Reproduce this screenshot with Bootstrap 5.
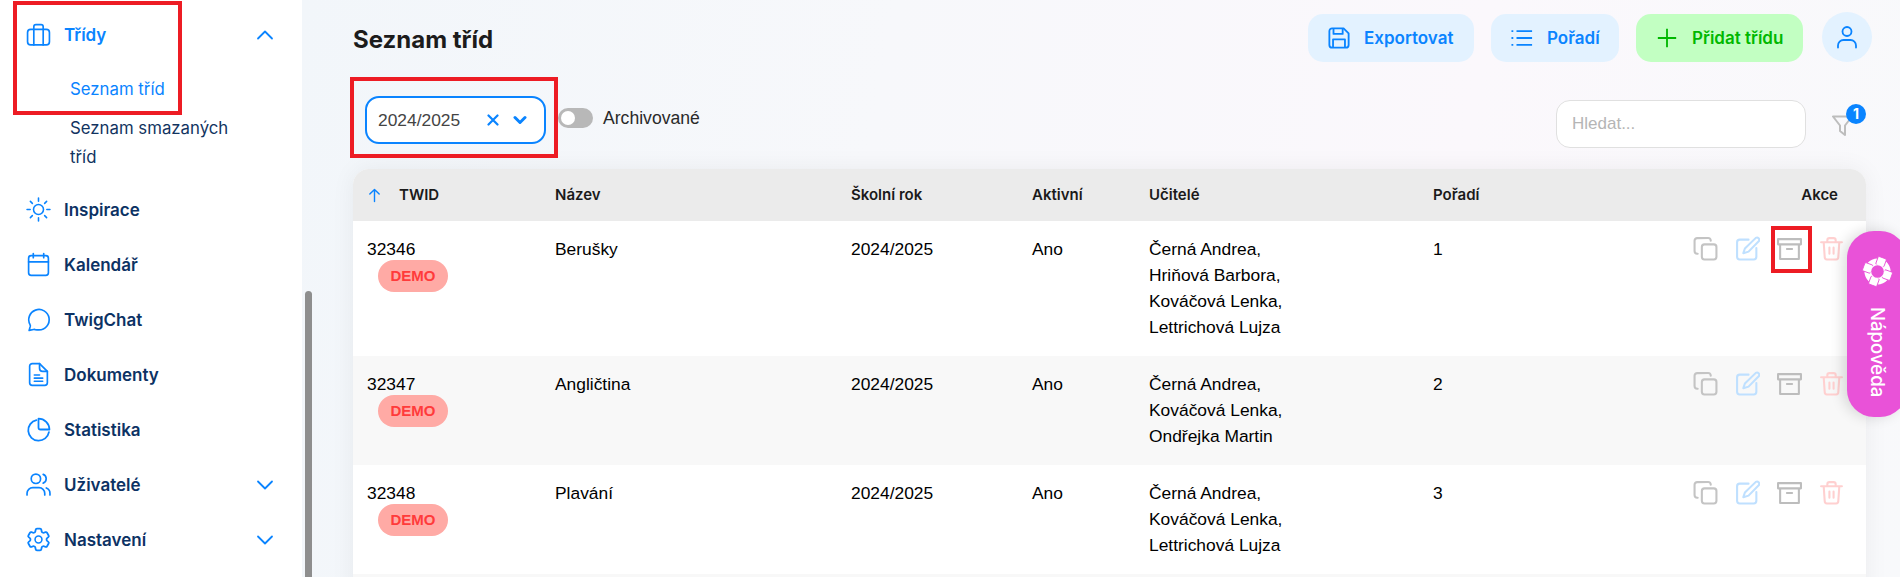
<!DOCTYPE html>
<html lang="cs">
<head>
<meta charset="utf-8">
<title>Seznam tříd</title>
<link href="https://cdn.jsdelivr.net/npm/bootstrap@5.3.0/dist/css/bootstrap.min.css" rel="stylesheet">
<style>
html,body{height:577px;overflow:hidden}
body{font-family:"Liberation Sans",Arial,sans-serif;color:#000;background:#fff;font-size:17px}
.shell{position:relative;width:1900px;height:577px;overflow:hidden}
.side{width:302px;flex:none;background:#fff;padding-top:7px}
.side-item{height:55px;padding:0 0 0 26px;font:600 17px/24px Inter,sans-serif;color:#0c3264;text-decoration:none}
.side-item svg.ic{width:25px;height:25px;flex:none;color:#0a84ff;margin-right:13px}
.side-item .chev{width:20px;height:20px;color:#0a84ff;margin-left:auto;margin-right:27px}
.side-item.on{color:#0a84ff}
.subs{padding:13px 60px 10px 70px;font:400 16.8px/29px Inter,sans-serif}
.subs a{display:block;color:#12345f;text-decoration:none}
.subs a+a{margin-top:10px}
.subs a.on{color:#0a84ff}
.main{flex:1;min-width:0;padding:14px 34px 0 51px;background:linear-gradient(100deg,#f2f6fa 0%,#f7f8fb 35%,#fbf8fc 70%,#f8f9fb 100%)}
.ptitle{font:700 24px/36px Inter,sans-serif;color:#1c1c1c;margin:0;padding-top:3px}
.tbar{height:48px;margin-right:-6px}
.tbtn{height:48px;border:0;border-radius:15px;background:#e3f2ff;color:#0a84ff;font:600 17px/24px Inter,sans-serif;padding:0 0 0 20px;gap:14px;white-space:nowrap}
.tbtn svg{width:22px;height:22px;flex:none}
.tbtn.add{background:#c2ffc2;color:#00b800}
.tb-exp{width:166px;margin-right:17px}.tb-ord{width:128px;margin-right:17px}.tb-add{width:167px}
.tbtn.who{width:50px;height:50px;border-radius:50%;padding:0;margin-top:-2px;margin-left:19px}
.tbtn.who svg{width:24px;height:24px}
.filters{margin-top:34px;height:48px;padding-left:12px}
.sel{width:181px;height:48px;border:2px solid #0a84ff;border-radius:14px;background:#fff;padding:0 17px 0 11px;color:#444;font-size:17.4px}
.sel svg{color:#0a84ff}
.sel .dn{margin-left:14px}
.tog{width:35px;height:20px;border-radius:10px;background:#b8b8b8;margin:0 10px 0 12px;padding:3px}
.tog i{display:block;width:14px;height:14px;border-radius:50%;background:#fff}
.tog-lab{color:#2a2a2a;font-size:17.6px;height:44px}
.tog-wrap{height:44px}
.srch{width:250px;height:48px;margin:4px 0 0 auto;border:1px solid #e0e0e0;border-radius:14px;background:#fff;padding:0 15px;color:#b5b5b5;font-size:17px}
.srch::placeholder{color:#b5b5b5}
.flt{position:relative;width:34px;margin-left:26px;height:48px;color:#bdbdbd}
.flt svg{margin-top:19px;display:block}
.flt b{position:absolute;left:14px;top:8px;width:20px;height:20px;border-radius:50%;background:#0a84ff;color:#fff;font:700 14px/20px Inter,sans-serif;text-align:center}
.tblwrap{margin-top:25px;background:#fff;border-radius:16px 16px 0 0;box-shadow:0 0 24px rgba(0,0,0,.06);overflow:hidden}
.tw{table-layout:fixed;margin:0;width:1513px;--bs-table-bg:#fff}
.tw th{--bs-table-bg:#ebebeb;height:52px;padding:0 0 0 14px;vertical-align:middle;font:600 15px/20px Inter,sans-serif;color:#1a1a1a}
.tw th.tr{text-align:right;padding-right:28px}
.tw th svg{color:#0a84ff;margin:0 17px 0 0;vertical-align:-3px}
.tw td{padding:15px 0 16px 14px;line-height:26px;font-size:17.4px;color:#000;vertical-align:top}
.tw tbody tr:nth-child(even) td{--bs-table-bg:#f8f8f8}
.demo{display:block;width:70px;height:32px;margin:-2px 0 0 11px;border-radius:16px;background:#ffaaa5;color:#ff3b3b;font-weight:700;font-size:15px;line-height:32px;text-align:center}
.acts{padding-right:22px;height:25px;gap:17px}
.acts svg{width:25px;height:25px;flex:none}
.c-copy{color:#c4c4c4}.c-edit{color:#bfe0ff}.c-arch{color:#bdbdbd}.c-del{color:#ffd0d0}
.thumb{position:absolute;left:305px;top:291px;width:7px;height:300px;background:#8e8e8e;border-radius:4px}
.helpme{position:absolute;left:1847px;top:231px;width:60px;height:186px;background:#e952d8;border-radius:27px;box-shadow:-4px 0 14px rgba(0,0,0,.14);color:#fff;padding-top:25px}
.helpme svg{display:block;margin-left:15px}
.helpme span{display:block;writing-mode:vertical-rl;font:500 18.6px/24px Inter,sans-serif;margin:20px 0 0 19px}
.mk{position:absolute;border:4px solid #ed1c24;pointer-events:none}
.mk1{left:13px;top:1px;width:169px;height:114px}
.mk2{left:350px;top:77px;width:208px;height:81px}
.mk3{left:1771px;top:226px;width:41px;height:47px}
</style>
</head>
<body>
<svg class="d-none" xmlns="http://www.w3.org/2000/svg">
<defs>
<symbol id="i-case" viewBox="0 0 24 24" fill="none" stroke="currentColor" stroke-width="1.6" stroke-linecap="round" stroke-linejoin="round"><rect x="1.5" y="7" width="21" height="15" rx="3"/><path d="M7.500 7v15M16.500 7v15M7.500 7V4.500a2 2 0 0 1 2-2h5a2 2 0 0 1 2 2V7"/></symbol>
<symbol id="i-sun" viewBox="0 0 24 24" fill="none" stroke="currentColor" stroke-width="1.5" stroke-linecap="round" stroke-linejoin="round"><path d="M12 1v3M19.800 4.200l-1.900 1.900M23 12h-3M19.800 19.800l-1.900-1.900M12 20v3M6.100 17.900l-1.900 1.900M4 12H1M6.100 6.100 4.200 4.200"/><circle cx="12" cy="12" r="4.800"/></symbol>
<symbol id="i-cal" viewBox="0 0 24 24" fill="none" stroke="currentColor" stroke-width="1.6" stroke-linecap="round" stroke-linejoin="round"><path d="M7 1.500v4M17 1.500v4"/><rect x="2.500" y="3.500" width="19" height="19" rx="2.500"/><path d="M2.500 9.500h19"/></symbol>
<symbol id="i-chat" viewBox="0 0 24 24" fill="none" stroke="currentColor" stroke-width="1.600" stroke-linecap="round" stroke-linejoin="round"><path d="M12.500 22a9.800 9.800 0 1 0-8.600-5c.3.500.3 1.100.2 1.600L3 22.500l4.300-.9c.5-.1 1-.1 1.500.1 1.200.2 2.400.3 3.700.3Z"/></symbol>
<symbol id="i-doc" viewBox="0 0 24 24" fill="none" stroke="currentColor" stroke-width="1.600" stroke-linecap="round" stroke-linejoin="round"><path d="M13 1.500H6a2.500 2.500 0 0 0-2.500 2.500v16A2.500 2.500 0 0 0 6 22.500h12a2.500 2.500 0 0 0 2.500-2.500V9Z"/><path d="M13 1.500V6a3 3 0 0 0 3 3h4.500M8 12.500h5M8 15.500h8M8 18.500h8"/></symbol>
<symbol id="i-pie" viewBox="0 0 24 24" fill="none" stroke="currentColor" stroke-width="1.700" stroke-linecap="round" stroke-linejoin="round"><path d="M10 3A10 10 0 1 0 22 14.500"/><path d="M12 1.500v8.500a2 2 0 0 0 2 2h8.500C22.500 6.200 17.800 1.500 12 1.500Z"/></symbol>
<symbol id="i-users" viewBox="0 0 24 24" fill="none" stroke="currentColor" stroke-width="1.600" stroke-linecap="round" stroke-linejoin="round"><circle cx="9.500" cy="6.500" r="4.500"/><path d="M1 22v-1.500a5.500 5.500 0 0 1 5.500-5.500h6a5.500 5.500 0 0 1 5.500 5.500V22M16.500 2.300a4.500 4.500 0 0 1 0 8.400M19.500 15.300a5.500 5.500 0 0 1 3.500 5.200V22"/></symbol>
<symbol id="i-cog" viewBox="0 0 24 24" fill="none" stroke="currentColor" stroke-width="1.500" stroke-linecap="round" stroke-linejoin="round"><path transform="translate(-1.800 -1.800) scale(1.150)" d="M9.594 3.940c.09-.542.56-.94 1.110-.94h2.593c.55 0 1.020.398 1.110.94l.213 1.281c.063.374.313.686.645.870.074.040.147.083.220.127.325.196.720.257 1.075.124l1.217-.456a1.125 1.125 0 0 1 1.370.490l1.296 2.247a1.125 1.125 0 0 1-.260 1.431l-1.003.827c-.293.241-.438.613-.430.992a7.723 7.723 0 0 1 0 .255c-.008.378.137.750.430.991l1.004.827c.424.350.534.955.260 1.430l-1.298 2.247a1.125 1.125 0 0 1-1.369.491l-1.217-.456c-.355-.133-.750-.072-1.076.124a6.470 6.470 0 0 1-.220.128c-.331.183-.581.495-.644.869l-.213 1.281c-.090.543-.560.940-1.110.940h-2.594c-.550 0-1.019-.398-1.110-.940l-.213-1.281c-.062-.374-.312-.686-.644-.870a6.520 6.520 0 0 1-.220-.127c-.325-.196-.720-.257-1.076-.124l-1.217.456a1.125 1.125 0 0 1-1.369-.490l-1.297-2.247a1.125 1.125 0 0 1 .260-1.431l1.004-.827c.292-.240.437-.613.430-.991a6.932 6.932 0 0 1 0-.255c.007-.380-.138-.751-.430-.992l-1.004-.827a1.125 1.125 0 0 1-.260-1.430l1.297-2.247a1.125 1.125 0 0 1 1.370-.491l1.216.456c.356.133.751.072 1.076-.124.072-.044.146-.086.220-.128.332-.183.582-.495.644-.869l.214-1.280Z"/><circle cx="12" cy="12" r="3.300"/></symbol>
<symbol id="i-down" viewBox="0 0 20 20" fill="none" stroke="currentColor" stroke-width="1.800" stroke-linecap="round" stroke-linejoin="round"><path d="m3 6.500 7 7 7-7"/></symbol>
<symbol id="i-up" viewBox="0 0 20 20" fill="none" stroke="currentColor" stroke-width="1.800" stroke-linecap="round" stroke-linejoin="round"><path d="m3 13.500 7-7 7 7"/></symbol>
<symbol id="i-copy" viewBox="0 0 24 24" fill="none" stroke="currentColor" stroke-width="2" stroke-linecap="round" stroke-linejoin="round"><rect x="8.500" y="8" width="14" height="14.500" rx="2.500"/><path d="M17 4.500V4a2.500 2.500 0 0 0-2.500-2H4A2.500 2.500 0 0 0 1.500 4.500v10A2.500 2.500 0 0 0 4 17h.5"/></symbol>
<symbol id="i-edit" viewBox="0 0 24 24" fill="none" stroke="currentColor" stroke-width="2" stroke-linecap="round" stroke-linejoin="round"><path d="M13 3.500H4.500A2.500 2.500 0 0 0 2 6v14a2.500 2.500 0 0 0 2.500 2.500H18a2.500 2.500 0 0 0 2.500-2.500v-8.500"/><path d="M20 1.800a2.200 2.200 0 0 1 3 3L13 15l-5 1.500L9.500 12Z"/></symbol>
<symbol id="i-arch" viewBox="0 0 24 24" fill="none" stroke="currentColor" stroke-width="2" stroke-linejoin="round"><rect x="1" y="3" width="22" height="5"/><path d="M3 8v14h18V8"/><path d="M9.500 12.500h5" stroke-linecap="round"/></symbol>
<symbol id="i-del" viewBox="0 0 24 24" fill="none" stroke="currentColor" stroke-width="2" stroke-linecap="round" stroke-linejoin="round"><path d="M2 6h20M8 6V4a2 2 0 0 1 2-2h4a2 2 0 0 1 2 2v2M4.500 6l1 14.500A2 2 0 0 0 7.500 22.500h9a2 2 0 0 0 2-2l1-14.500M10 11v6M14 11v6"/></symbol>
</defs>
</svg>

<div class="shell d-flex">
  <nav class="side">
    <a class="side-item on d-flex align-items-center" href="#"><svg class="ic"><use href="#i-case"/></svg>Třídy<svg class="chev"><use href="#i-up"/></svg></a>
    <div class="subs"><a class="on" href="#">Seznam tříd</a><a href="#">Seznam smazaných tříd</a></div>
    <a class="side-item d-flex align-items-center" href="#"><svg class="ic"><use href="#i-sun"/></svg>Inspirace</a>
    <a class="side-item d-flex align-items-center" href="#"><svg class="ic"><use href="#i-cal"/></svg>Kalendář</a>
    <a class="side-item d-flex align-items-center" href="#"><svg class="ic"><use href="#i-chat"/></svg>TwigChat</a>
    <a class="side-item d-flex align-items-center" href="#"><svg class="ic"><use href="#i-doc"/></svg>Dokumenty</a>
    <a class="side-item d-flex align-items-center" href="#"><svg class="ic"><use href="#i-pie"/></svg>Statistika</a>
    <a class="side-item d-flex align-items-center" href="#"><svg class="ic"><use href="#i-users"/></svg>Uživatelé<svg class="chev"><use href="#i-down"/></svg></a>
    <a class="side-item d-flex align-items-center" href="#"><svg class="ic"><use href="#i-cog"/></svg>Nastavení<svg class="chev"><use href="#i-down"/></svg></a>
  </nav>

  <main class="main">
    <div class="tbar d-flex align-items-center">
      <h1 class="ptitle me-auto">Seznam tříd</h1>
      <button class="tbtn tb-exp d-flex align-items-center" type="button"><svg viewBox="0 0 24 24" fill="none" stroke="currentColor" stroke-width="2" stroke-linejoin="round"><path d="M1.500 4.500a3 3 0 0 1 3-3h12.500l5.500 5.500v12.500a3 3 0 0 1-3 3H4.500a3 3 0 0 1-3-3Z"/><path d="M6 1.500v6h10v-6M5.500 22.500v-9h13v9"/></svg><span>Exportovat</span></button>
      <button class="tbtn tb-ord d-flex align-items-center" type="button"><svg viewBox="0 0 24 24" fill="none" stroke="currentColor" stroke-width="2"><path d="M6 4.500h17M6 12h17M6 19.500h17M1.500 3.500v2M1.500 11v2M1.500 18.500v2"/></svg><span>Pořadí</span></button>
      <button class="tbtn add tb-add d-flex align-items-center" type="button"><svg viewBox="0 0 24 24" fill="none" stroke="currentColor" stroke-width="2"><path d="M12 2v20M2 12h20"/></svg><span>Přidat třídu</span></button>
      <button class="tbtn who d-flex align-items-center justify-content-center" type="button" aria-label="Profil"><svg viewBox="0 0 24 24" fill="none" stroke="currentColor" stroke-width="1.800" stroke-linecap="round"><circle cx="12" cy="6.500" r="4.500"/><path d="M3 22.500v-2a5.500 5.500 0 0 1 5.500-5.500h7a5.500 5.500 0 0 1 5.500 5.500v2"/></svg></button>
    </div>

    <div class="filters d-flex align-items-start">
      <div class="sel d-flex align-items-center">
        <span class="me-auto">2024/2025</span>
        <svg width="12" height="12" viewBox="0 0 12 12" fill="none" stroke="currentColor" stroke-width="2.200" stroke-linecap="round"><path d="m1.500 1.500 9 9M10.500 1.500l-9 9"/></svg>
        <svg class="dn" width="14" height="12" viewBox="0 0 14 12" fill="none" stroke="currentColor" stroke-width="3" stroke-linecap="round" stroke-linejoin="round"><path d="m2 3.500 5 5 5-5"/></svg>
      </div>
      <div class="d-flex align-items-center tog-wrap"><span class="tog"><i></i></span></div>
      <div class="d-flex align-items-center tog-lab">Archivované</div>
      <input class="srch" type="text" placeholder="Hledat...">
      <div class="flt"><svg width="21" height="21" viewBox="0 0 21 21" fill="none" stroke="currentColor" stroke-width="2" stroke-linejoin="round"><path d="M1 1.500h19L13 10.500v9.500l-5-4v-5.500Z"/></svg><b>1</b></div>
    </div>

    <div class="tblwrap">
      <table class="table table-borderless tw">
        <colgroup><col style="width:188px"><col style="width:296px"><col style="width:181px"><col style="width:117px"><col style="width:284px"><col style="width:200px"><col style="width:247px"></colgroup>
        <thead><tr><th><svg width="15" height="15" viewBox="0 0 16 16" fill="none" stroke="currentColor" stroke-width="1.500" stroke-linecap="round" stroke-linejoin="round"><path d="M8 14.500v-13M3 6.500l5-5 5 5"/></svg>TWID</th><th>Název</th><th>Školní rok</th><th>Aktivní</th><th>Učitelé</th><th>Pořadí</th><th class="tr">Akce</th></tr></thead>
        <tbody>
          <tr><td>32346<span class="demo">DEMO</span></td><td>Berušky</td><td>2024/2025</td><td>Ano</td><td>Černá Andrea,<br>Hriňová Barbora,<br>Kováčová Lenka,<br>Lettrichová Lujza</td><td>1</td>
            <td><div class="acts d-flex justify-content-end"><svg class="c-copy"><use href="#i-copy"/></svg><svg class="c-edit"><use href="#i-edit"/></svg><svg class="c-arch"><use href="#i-arch"/></svg><svg class="c-del"><use href="#i-del"/></svg></div></td></tr>
          <tr><td>32347<span class="demo">DEMO</span></td><td>Angličtina</td><td>2024/2025</td><td>Ano</td><td>Černá Andrea,<br>Kováčová Lenka,<br>Ondřejka Martin</td><td>2</td>
            <td><div class="acts d-flex justify-content-end"><svg class="c-copy"><use href="#i-copy"/></svg><svg class="c-edit"><use href="#i-edit"/></svg><svg class="c-arch"><use href="#i-arch"/></svg><svg class="c-del"><use href="#i-del"/></svg></div></td></tr>
          <tr><td>32348<span class="demo">DEMO</span></td><td>Plavání</td><td>2024/2025</td><td>Ano</td><td>Černá Andrea,<br>Kováčová Lenka,<br>Lettrichová Lujza</td><td>3</td>
            <td><div class="acts d-flex justify-content-end"><svg class="c-copy"><use href="#i-copy"/></svg><svg class="c-edit"><use href="#i-edit"/></svg><svg class="c-arch"><use href="#i-arch"/></svg><svg class="c-del"><use href="#i-del"/></svg></div></td></tr>
          <tr><td>&nbsp;</td><td></td><td></td><td></td><td></td><td></td><td></td></tr>
        </tbody>
      </table>
    </div>
  </main>

  <div class="thumb"></div>
  <div class="helpme">
    <svg width="31" height="31" viewBox="0 0 32 32"><g transform="rotate(20 16 16)"><circle cx="16" cy="16" r="13.500" fill="#fff"/><g fill="#fff" stroke="#e952d8" stroke-width=".9"><rect x="11.500" y="0.800" width="9" height="9" rx="1.500"/><rect x="11.500" y="22.200" width="9" height="9" rx="1.500"/><rect x="0.800" y="11.500" width="9" height="9" rx="1.500"/><rect x="22.200" y="11.500" width="9" height="9" rx="1.500"/></g></g><circle cx="16" cy="16" r="7.500" fill="#fff"/><circle cx="16" cy="16" r="6.500" fill="#e952d8"/></svg>
    <span>Nápověda</span>
  </div>
  <div class="mk mk1"></div>
  <div class="mk mk2"></div>
  <div class="mk mk3"></div>
</div>
<script src="https://cdn.jsdelivr.net/npm/bootstrap@5.3.0/dist/js/bootstrap.bundle.min.js"></script>
</body>
</html>
